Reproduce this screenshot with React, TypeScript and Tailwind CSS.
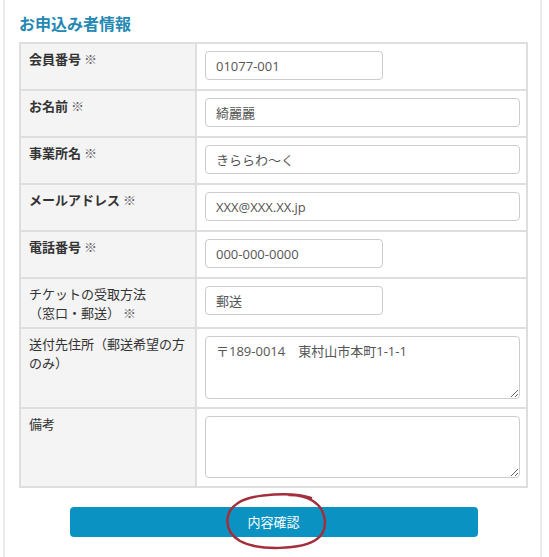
const rows = [
  { label: "会員番号", value: "01077-001", short: true },
  { label: "お名前", value: "綺麗麗" },
  { label: "事業所名", value: "きららわ～く" },
  { label: "メールアドレス", value: "XXX@XXX.XX.jp" },
  { label: "電話番号", value: "000-000-0000", short: true },
];

const Req = () => <span className="font-normal text-[#666]"> ※</span>;

const field =
  "rounded-[4px] border border-[#cccccc] bg-white px-[10px] font-['Open_Sans','Noto_Sans_CJK_JP',sans-serif] text-[13px] text-[#555] outline-none";

export default function App() {
  return (
    <div className="min-h-[557px] w-[549px] bg-white font-['Noto_Sans_CJK_JP',sans-serif] text-[13px] text-[#333]">
      <div className="relative ml-[3px] min-h-[557px] w-[539px] border-x-2 border-[#ebebeb] pl-[14px] pr-[12px]">
        <h2 className="pt-[11px] pb-[7px] text-[16px] font-bold leading-[24px] text-[#2389b3]">
          お申込み者情報
        </h2>

        <div className="border-2 border-[#dedede]">
          {rows.map((r, i) => (
            <div key={r.label} className={`flex ${i > 0 ? "border-t-2 border-[#dedede]" : ""}`}>
              <div className="w-[176px] shrink-0 border-r-2 border-[#dedede] bg-[#f4f4f4] px-2 pt-[5px] leading-[19px] font-bold">
                {r.label}
                <Req />
              </div>
              <div className="flex-1 pl-2 pr-[6px] pt-[7px] pb-[9px]">
                <input
                  readOnly
                  value={r.value}
                  className={`h-[29px] ${field} ${r.short ? "w-[178px]" : "w-full"}`}
                />
              </div>
            </div>
          ))}

          <div className="flex border-t-2 border-[#dedede]">
            <div className="w-[176px] shrink-0 border-r-2 border-[#dedede] bg-[#f4f4f4] px-2 pt-[5px] pb-[5px] leading-[19px]">
              チケットの受取方法
              <br />
              （窓口・郵送）
              <Req />
            </div>
            <div className="flex-1 pl-2 pr-[6px] pt-[7px] pb-[9px]">
              <input readOnly value="郵送" className={`h-[29px] w-[178px] ${field}`} />
            </div>
          </div>

          <div className="flex border-t-2 border-[#dedede]">
            <div className="w-[176px] shrink-0 border-r-2 border-[#dedede] bg-[#f4f4f4] px-2 pt-[5px] leading-[19px]">
              送付先住所（郵送希望の方のみ）
            </div>
            <div className="flex-1 pl-2 pr-[6px] pt-[7px] pb-[8px]">
              <textarea
                readOnly
                value={"〒189-0014　東村山市本町1-1-1"}
                className={`block h-[63px] w-full py-[5px] leading-[19px] ${field}`}
              />
            </div>
          </div>

          <div className="flex border-t-2 border-[#dedede]">
            <div className="w-[176px] shrink-0 border-r-2 border-[#dedede] bg-[#f4f4f4] px-2 pt-[5px] leading-[19px]">
              備考
            </div>
            <div className="flex-1 pl-2 pr-[6px] pt-[7px] pb-[8px]">
              <textarea readOnly className={`block h-[62px] w-full py-[5px] ${field}`} />
            </div>
          </div>
        </div>

        <div className="flex justify-center pt-[19px]">
          <button className="h-[30px] w-[408px] rounded-[4px] bg-[#0a93c2] text-[13px] text-white">
            内容確認
          </button>
        </div>

        {/* hand-drawn annotation */}
        <svg
          className="pointer-events-none absolute left-[200px] top-[488px]"
          width="140"
          height="69"
          viewBox="0 0 140 69"
        >
          <path
            d="M106 10 C 90 4, 48 5, 33 15 C 19 24, 18 43, 35 53 C 53 63, 97 62, 112 51 C 124 42, 122 22, 108 13 C 102 9, 94 7, 84 7"
            fill="none"
            stroke="#a32f3c"
            strokeWidth="2.5"
            strokeLinecap="round"
          />
        </svg>
      </div>
    </div>
  );
}
